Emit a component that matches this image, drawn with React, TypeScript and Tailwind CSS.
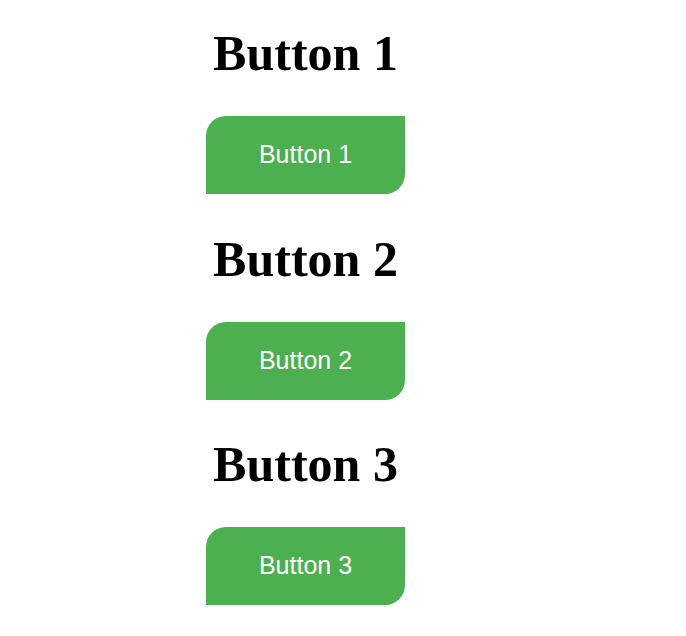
const items = ['Button 1', 'Button 2', 'Button 3'];

export default function App() {
  return (
    <div className="min-h-[636px] w-full bg-white pl-[206px] pt-[28px]">
      <div className="flex w-[199px] flex-col gap-[39.5px]">
        {items.map((label) => (
          <section key={label} className="flex flex-col items-center">
            <h1 className="h-[50px] whitespace-nowrap text-center font-['Liberation_Serif',serif] text-[50px] font-bold leading-[50px] text-black">
              {label}
            </h1>
            <button className="mt-[38px] flex h-[78px] w-[199px] items-center justify-center rounded-tl-[20px] rounded-br-[20px] bg-[#4caf50] font-['Liberation_Sans',Arial,sans-serif] text-[25px] text-white">
              {label}
            </button>
          </section>
        ))}
      </div>
    </div>
  );
}
